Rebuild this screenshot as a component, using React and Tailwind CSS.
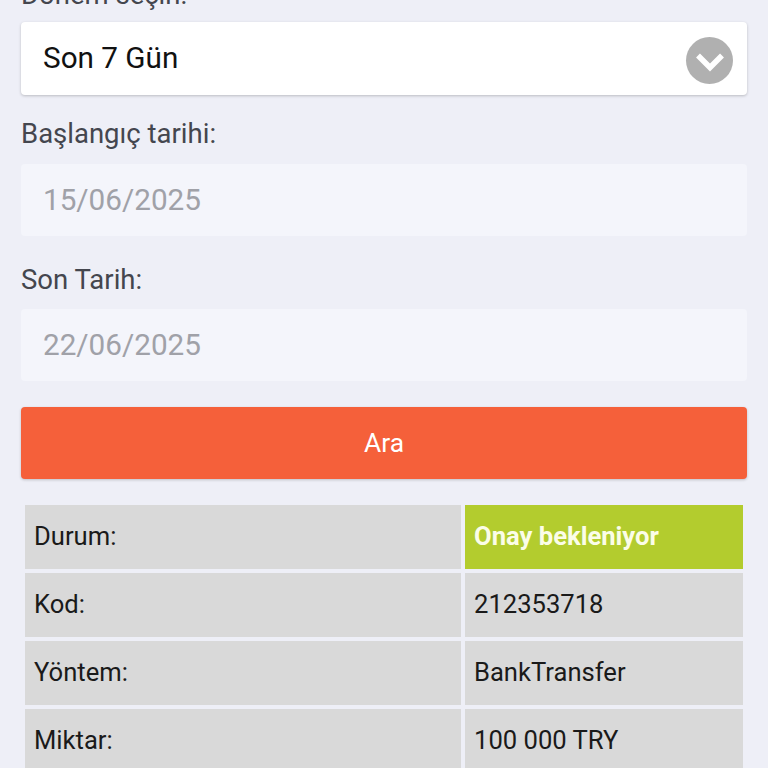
import React from "react";

const rows = [
  { label: "Durum:", value: "Onay bekleniyor", status: true },
  { label: "Kod:", value: "212353718" },
  { label: "Yöntem:", value: "BankTransfer" },
  { label: "Miktar:", value: "100 000 TRY" },
];

const DateField = ({ label, value, className = "", labelClass = "pt-[21px]" }) => (
  <div className={className}>
    <label className={`block h-[69px] text-[27.5px] leading-[36px] text-[#44464e] ${labelClass}`}>{label}</label>
    <div className="flex h-[72px] items-center rounded-[4px] bg-[#f4f5fb] px-[22px] text-[29.7px] text-[#a0a1a8]">
      {value}
    </div>
  </div>
);

export default function App() {
  return (
    <div className="h-[768px] overflow-hidden bg-[#eeeff7] font-['Roboto',sans-serif]">
      <div className="-mt-[23px] px-[21px]">
        <label className="block h-[45px] text-[27.5px] leading-[36px] text-[#44464e]">Dönem seçin:</label>

        {/* Period select */}
        <div className="flex h-[73px] items-center justify-between rounded-[4px] bg-white pl-[22px] pr-[14px] text-[29.7px] text-[#111111] shadow-[0_1px_3px_rgba(0,0,0,0.22)]">
          <span>Son 7 Gün</span>
          <span className="mt-[3px] flex h-[47px] w-[47px] items-center justify-center rounded-full bg-[#b0b0b0]">
            <svg width="30" height="24" viewBox="0 0 30 24" fill="none">
              <path d="M3 7.5 L15 19.5 L27 7.5" stroke="#ffffff" strokeWidth="5.5" />
            </svg>
          </span>
        </div>

        <DateField label="Başlangıç tarihi:" value="15/06/2025" />
        <DateField className="mt-[4px]" labelClass="pt-[22px]" label="Son Tarih:" value="22/06/2025" />

        <button className="mt-[26px] block h-[72px] w-full rounded-[4px] bg-[#f5603a] pt-[2px] text-[26.4px] text-white shadow-[0_1px_3px_rgba(0,0,0,0.2)]">
          Ara
        </button>

        {/* Detail table */}
        <div className="mt-[26px] grid grid-cols-[436px_278px] gap-[4px] px-[4px]">
          {rows.map((row) => (
            <React.Fragment key={row.label}>
              <div className="flex h-[64px] items-center bg-[#d9d9d9] pb-[2px] pl-[9px] text-[25.6px] text-[#1a1a1a]">
                {row.label}
              </div>
              <div
                className={
                  row.status
                    ? "flex h-[64px] items-center bg-[#b3cc2e] pb-[2px] pl-[9px] text-[25.6px] font-bold text-[#fbfde8]"
                    : "flex h-[64px] items-center bg-[#d9d9d9] pb-[2px] pl-[9px] text-[25.6px] text-[#1a1a1a]"
                }
              >
                {row.value}
              </div>
            </React.Fragment>
          ))}
        </div>
      </div>
    </div>
  );
}
